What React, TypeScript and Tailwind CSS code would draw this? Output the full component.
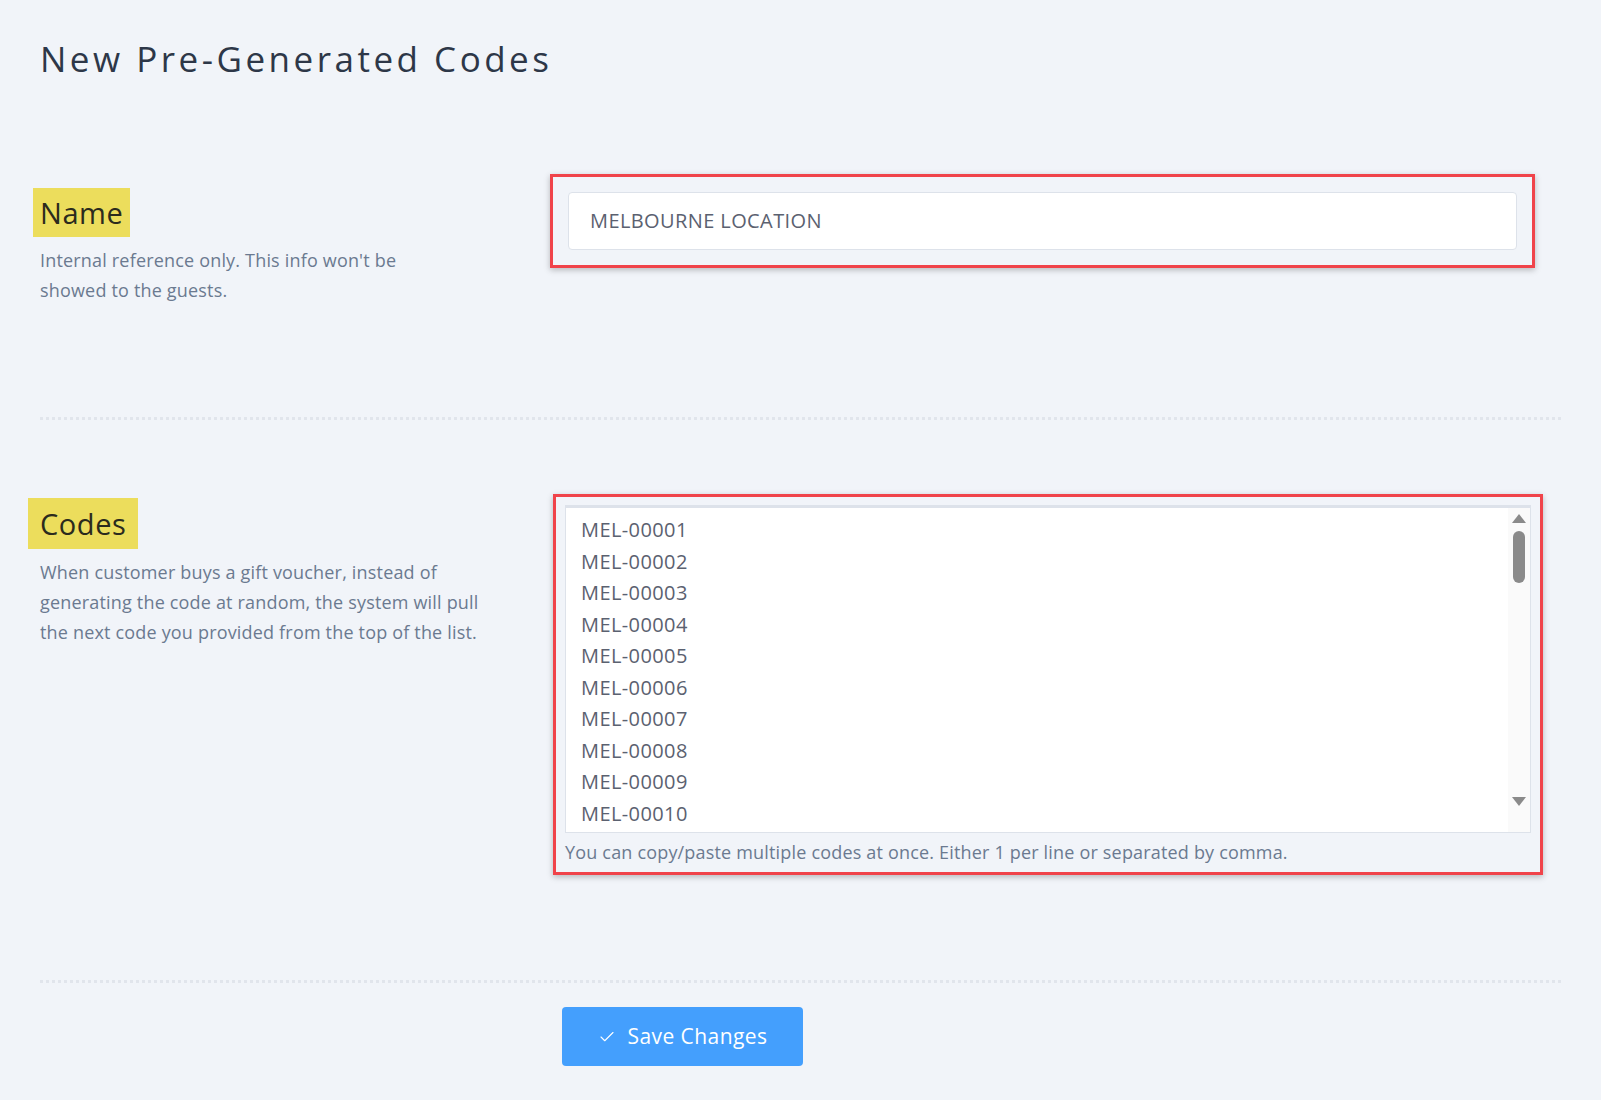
import { Check } from 'lucide-react'

const codes = Array.from({ length: 10 }, (_, i) => `MEL-${String(i + 1).padStart(5, '0')}`)

export default function App() {
  return (
    <div className="min-h-[1100px] bg-[#f1f4f9] px-[40px] pt-[36px] text-[#4a5568]" style={{ fontFamily: '"Open Sans", sans-serif' }}>
      <h1 className="text-[35px] font-normal tracking-[0.1em] text-[#2d3748] leading-[46px]">New Pre-Generated Codes</h1>

      <div className="mt-[92px] flex items-start">
        <div className="w-[510px] shrink-0 pt-[14px]">
          <span className="-ml-[7px] inline-block bg-[#ecdd5c] px-[7px] py-[4px] text-[29px] leading-[41px] tracking-[0.02em] text-[#2b2b1d]">Name</span>
          <p className="mt-[8px] w-[420px] text-[18px] leading-[30px] tracking-[0.01em] text-[#6b7a90]">Internal reference only. This info won't be showed to the guests.</p>
        </div>
        <div className="w-[985px] border-[3px] border-[#f0434a] p-[15px] shadow-[0_2px_6px_rgba(0,0,0,0.25)]">
          <div className="flex h-[58px] items-center rounded-[4px] border border-[#dde2ea] bg-white px-[21px] text-[20px] tracking-[0.02em] text-[#5b6170]">MELBOURNE LOCATION</div>
        </div>
      </div>

      <div className="mt-[112px] border-t-[3px] border-dotted border-[#e1e5ec]" />

      <div className="mt-[74px] flex items-start">
        <div className="w-[513px] shrink-0 pt-[4px]">
          <span className="-ml-[12px] inline-block bg-[#ecdd5c] px-[12px] py-[5px] text-[29px] leading-[41px] tracking-[0.02em] text-[#2b2b1d]">Codes</span>
          <p className="mt-[8px] w-[450px] text-[18px] leading-[30px] tracking-[0.01em] text-[#6b7a90]">When customer buys a gift voucher, instead of generating the code at random, the system will pull the next code you provided from the top of the list.</p>
        </div>
        <div className="w-[990px] border-[3px] border-[#f0434a] px-[9px] pt-[8px] pb-[6px] shadow-[0_2px_6px_rgba(0,0,0,0.25)]">
          <div className="flex h-[328px] overflow-hidden border border-[#dde2ea] border-t-[3px] bg-white">
            <div className="flex-1 px-[15px] pt-[6px] text-[20px] leading-[31.5px] tracking-[0.02em] text-[#5b6170]">
              {codes.map((c) => <div key={c}>{c}</div>)}
            </div>
            <div className="flex w-[22px] flex-col items-center bg-[#fafafa]">
              <div className="mt-[6px] h-0 w-0 border-x-[7px] border-b-[9px] border-x-transparent border-b-[#8a8a8a]" />
              <div className="mt-[8px] h-[52px] w-[12px] rounded-full bg-[#8a8a8a]" />
              <div className="flex-1" />
              <div className="mb-[26px] h-0 w-0 border-x-[7px] border-t-[9px] border-x-transparent border-t-[#8a8a8a]" />
            </div>
          </div>
          <p className="mt-[6px] text-[18px] tracking-[0.01em] text-[#6b7a90]">You can copy/paste multiple codes at once. Either 1 per line or separated by comma.</p>
        </div>
      </div>

      <div className="mt-[105px] border-t-[3px] border-dotted border-[#e1e5ec]" />

      <div className="mt-[24px] pl-[522px]">
        <button className="flex h-[59px] w-[241px] items-center justify-center gap-[12px] rounded-[4px] bg-[#449ffd] text-[21px] tracking-[0.02em] text-white">
          <Check className="h-[18px] w-[18px]" strokeWidth={1.5} /> Save Changes
        </button>
      </div>
    </div>
  )
}
